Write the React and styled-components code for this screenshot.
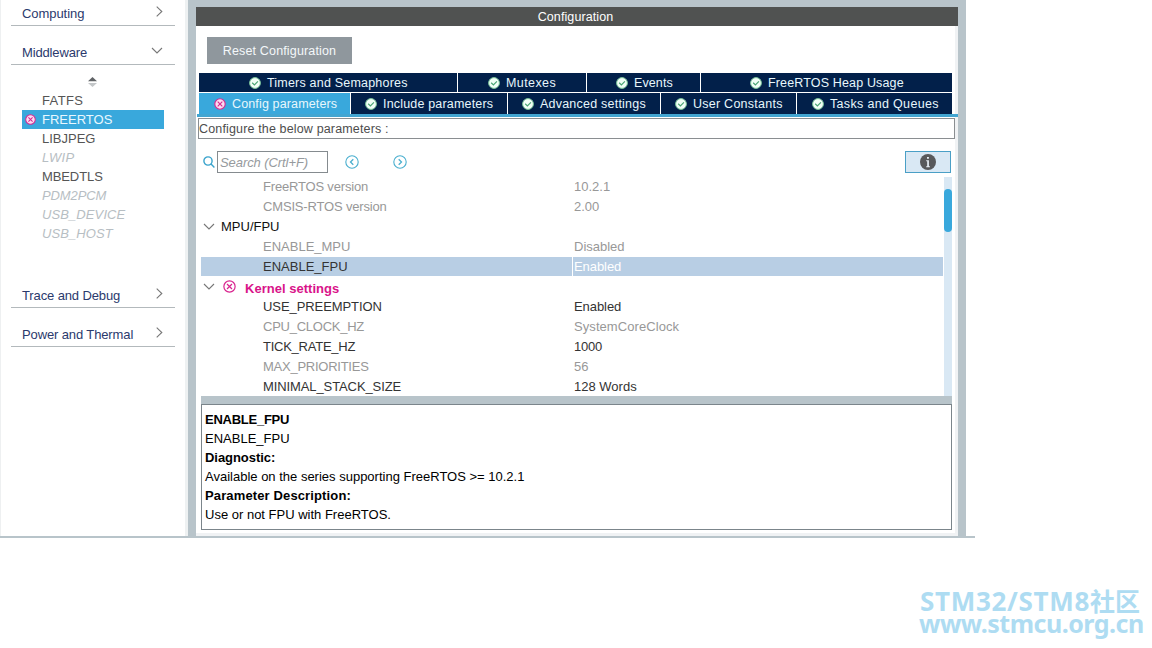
import React from "react";
import styled, { createGlobalStyle, css } from "styled-components";

const GlobalStyle = createGlobalStyle`
  * { box-sizing: border-box; }
  body {
    margin: 0;
    background: #fff;
    font-family: "Liberation Sans", Arial, sans-serif;
    font-size: 13px;
    color: #111;
  }
  svg { display: block; flex: none; }
`;

const Page = styled.div`
  width: 1152px;
  height: 648px;
  display: flex;
  flex-direction: column;
  justify-content: space-between;
  overflow: hidden;
  white-space: nowrap;
`;

const AppFrame = styled.div`
  width: 975px;
  height: 538px;
  display: flex;
  border-bottom: 2px solid #b8c4ca;
`;

const Sidebar = styled.nav`
  width: 188px;
  padding: 0 10px 0 10px;
  border-left: 1px solid #eef0f1;
  border-right: 3px solid #eef1f2;
  display: flex;
  flex-direction: column;
`;

const Category = styled.div`
  width: 164px;
  height: ${(p) => p.$height || 39}px;
  border-bottom: 1px solid #b3b9bc;
  display: flex;
  justify-content: space-between;
  align-items: flex-end;
  padding: 0 12px 4px 11px;
  color: #2b3a6d;
  line-height: 15px;
  letter-spacing: ${(p) => p.$spacing || 0}px;

  svg { margin-bottom: ${(p) => (p.$open ? 6 : 4)}px; }
`;

const MiddlewareList = styled.div`
  width: 164px;
  height: 204px;
  padding: 12px 11px 0;
`;

const SortHandle = styled.div`
  height: 14px;
  padding-left: 66px;
`;

const Module = styled.div`
  height: 19px;
  display: flex;
  align-items: center;
  line-height: 15px;
  color: #555;
  letter-spacing: ${(p) => p.$spacing || 0}px;
  ${(p) => p.$disabled && css`color: #b7bec3; font-style: italic;`}
  ${(p) => p.$selected && css`background: #39a8dc; color: #e9f8ff;`}
`;

const ModuleStatus = styled.span`
  width: 20px;
  padding-left: 3px;
`;

const ConfigFrame = styled.main`
  width: 778px;
  padding: 7px 8px 0;
  background: #b8c4ca;
`;

const TitleBar = styled.header`
  height: 19px;
  background: #505251;
  color: #fff;
  text-align: center;
  font-size: 12.5px;
  letter-spacing: 0.1px;
  line-height: 20px;
  padding-right: 3px;
`;

const ConfigPanel = styled.section`
  height: 510px;
  background: #fff;
  border: solid #f0f2f4;
  border-width: 0 3px 3px 0;
  padding: 11px 0 0 1px;
`;

const ResetButton = styled.button`
  display: block;
  width: 145px;
  height: 27px;
  margin-left: 10px;
  padding: 0;
  border: 0;
  background: #8f979d;
  color: #f4f8fa;
  font: 12.5px "Liberation Sans", Arial, sans-serif;
  letter-spacing: 0.15px;
`;

const Tabs = styled.div`
  margin: 9px -3px 0 0;
  border-bottom: 3px solid #42a5d1;
`;

const TabRow = styled.div`
  width: 753px;
  margin: 0 0 0 2px;
  display: flex;
  gap: 1px;
  & + & { margin-top: 1px; }
`;

const Tab = styled.div`
  width: ${(p) => p.$width}px;
  height: ${(p) => p.$height}px;
  padding-left: ${(p) => p.$inset}px;
  display: flex;
  align-items: center;
  gap: 6px;
  background: ${(p) => (p.$active ? "#39a8dc" : "#02204a")};
  color: #e8f7fc;
  font-size: 12.5px;
  letter-spacing: ${(p) => p.$spacing}px;
`;

const Hint = styled.div`
  width: 757px;
  height: 21px;
  margin: 1px 0 0 1px;
  border: 1px solid #8a8e91;
  color: #4d4d4d;
  font-size: 12.5px;
  letter-spacing: 0.15px;
  line-height: 20px;
`;

const SearchBar = styled.div`
  height: 22px;
  margin: 12px 3px 4px 6px;
  display: flex;
  align-items: center;
`;

const SearchInput = styled.div`
  width: 111px;
  height: 22px;
  margin: 0 17px 0 2px;
  border: 1px solid #858b8f;
  padding-left: 2px;
  color: #969a9d;
  font-style: italic;
  line-height: 21px;
  letter-spacing: -0.08px;
`;

const InfoButton = styled.div`
  width: 46px;
  height: 22px;
  margin-left: auto;
  margin-right: 1px;
  border: 1px solid #4a9fc6;
  background: #d9e8f4;
  display: grid;
  place-items: center;
`;

const TableArea = styled.div`
  width: 751px;
  margin-left: 4px;
  display: flex;
`;

const Table = styled.div`
  width: 743px;
  height: 219px;
  padding-right: 1px;
  overflow: hidden;
`;

const Row = styled.div`
  height: 19px;
  margin-bottom: 1px;
  display: flex;
  line-height: 19px;
  color: ${(p) => (p.$disabled ? "#989898" : "#333")};
  background: ${(p) => (p.$selected ? "#b8cee4" : "transparent")};
`;

const ParamName = styled.div`
  width: 371px;
  padding-left: 62px;
  letter-spacing: ${(p) => p.$spacing || 0}px;
`;

const ParamValue = styled.div`
  flex: 1;
  border-left: 1px solid #fff;
  padding-left: 1px;
  letter-spacing: ${(p) => p.$spacing || 0}px;
  color: ${(p) => (p.$selected ? "#fff" : "inherit")};
`;

const GroupRow = styled.div`
  height: 19px;
  margin-bottom: 1px;
  padding-left: 2px;
  display: flex;
  align-items: center;
  gap: ${(p) => (p.$error ? 8 : 6)}px;
`;

const ErrorTitle = styled.span`
  margin-left: 1px;
  padding-top: 3px;
  color: #d9138a;
  font-weight: bold;
  letter-spacing: 0.02px;
`;

const ScrollTrack = styled.div`
  width: 8px;
  height: 219px;
  padding-top: 12px;
  background: #d9e8f4;
`;

const ScrollThumb = styled.div`
  height: 43px;
  border-radius: 4px;
  background: #39a8dc;
`;

const Details = styled.div`
  width: 751px;
  height: 134px;
  margin-left: 4px;
  border-top: 8px solid #b8c4ca;
`;

const DetailsText = styled.div`
  height: 126px;
  border: 1px solid #7b858b;
  padding: 5px 3px;
  line-height: 19px;
  color: #000;
`;

const DetailLine = styled.div`
  font-weight: ${(p) => (p.$bold ? "bold" : "normal")};
  letter-spacing: ${(p) => p.$spacing || 0}px;
`;

const Watermark = styled.footer`
  align-self: flex-end;
  width: 233px;
  height: 58px;
  color: #aedcf2;
  font-family: "Noto Sans", "Noto Sans CJK SC", sans-serif;
  font-weight: 700;
  line-height: 22px;
`;

const WatermarkLine = styled.div`
  height: 22px;
  display: flex;
  font-size: ${(p) => p.$size}px;
  letter-spacing: ${(p) => p.$spacing}px;
  padding-left: ${(p) => p.$inset || 0}px;
`;

const WatermarkHan = styled.span`
  font-size: 25px;
  letter-spacing: 0;
`;

const Chevron = ({ down }) =>
  down ? (
    <svg width="12" height="7" viewBox="0 0 12 7" fill="none" stroke="#777" strokeWidth="1.1">
      <path d="M1 1 6 6 11 1" />
    </svg>
  ) : (
    <svg width="7" height="12" viewBox="0 0 7 12" fill="none" stroke="#777" strokeWidth="1.1">
      <path d="M.7 1.7 5.8 6.5 .7 11.3" />
    </svg>
  );

const ErrorIcon = ({ size = 11, fill = "#fbdcf0" }) => (
  <svg width={size} height={size} viewBox="0 0 12 12" fill="none" stroke="#d9248f" strokeWidth="1.1">
    <circle cx="6" cy="6" r="5.2" fill={fill} />
    <path d="m3.7 3.7 4.6 4.6m0-4.6L3.7 8.3" />
  </svg>
);

const CheckIcon = () => (
  <svg width="12" height="12" viewBox="0 0 12 12" fill="none">
    <circle cx="6" cy="6" r="5.4" fill="#f2fff7" stroke="#7cc79b" strokeWidth="1" />
    <path d="m3.2 5.8 2.2 2.1 3.5-3.6" stroke="#49a574" strokeWidth="1.2" />
  </svg>
);

const SearchIcon = () => (
  <svg width="12" height="12" viewBox="0 0 12 12" fill="none" stroke="#39a3cc" strokeWidth="1.4">
    <circle cx="5" cy="5" r="4.1" />
    <path d="m7.8 7.8 3.6 3.6" />
  </svg>
);

const StepIcon = styled(({ back, className }) => (
  <svg className={className} width="14" height="14" viewBox="0 0 14 14" fill="none" stroke="#4aafcf">
    <circle cx="7" cy="7" r="6.2" strokeWidth="1.1" />
    <path d={back ? "M8.3 4.2 5.5 7l2.8 2.8" : "M5.7 4.2 8.5 7 5.7 9.8"} strokeWidth="1.3" />
  </svg>
))`
  margin-right: 34px;
`;

const InfoIcon = () => (
  <svg width="16" height="16" viewBox="0 0 16 16">
    <circle cx="8" cy="8" r="8" fill="#58595b" />
    <path d="M6.2 6.2h2.7v6h1v1H6.2v-1h1v-5h-1zM7 2.9h1.9v1.9H7z" fill="#e8eff5" />
  </svg>
);

const modules = [
  { name: "FATFS", spacing: 0.35 },
  { name: "FREERTOS", selected: true },
  { name: "LIBJPEG" },
  { name: "LWIP", disabled: true, spacing: 0.3 },
  { name: "MBEDTLS", spacing: -0.1 },
  { name: "PDM2PCM", disabled: true, spacing: -0.1 },
  { name: "USB_DEVICE", disabled: true, spacing: 0.1 },
  { name: "USB_HOST", disabled: true, spacing: 0.1 },
];

const upperTabs = [
  { label: "Timers and Semaphores", width: 258, inset: 50, spacing: 0.2 },
  { label: "Mutexes", width: 128, inset: 30, spacing: 0.4 },
  { label: "Events", width: 113, inset: 29, spacing: 0.1 },
  { label: "FreeRTOS Heap Usage", width: 251, inset: 49, spacing: 0.15 },
];

const lowerTabs = [
  { label: "Config parameters", width: 151, inset: 15, spacing: 0.14, active: true },
  { label: "Include parameters", width: 156, inset: 14, spacing: 0.18 },
  { label: "Advanced settings", width: 152, inset: 14, spacing: 0.22 },
  { label: "User Constants", width: 135, inset: 14, spacing: 0.25 },
  { label: "Tasks and Queues", width: 155, inset: 15, spacing: 0.33 },
];

const Param = ({ name, value, disabled, selected, ns, vs }) => (
  <Row $disabled={disabled} $selected={selected}>
    <ParamName $spacing={ns}>{name}</ParamName>
    <ParamValue $selected={selected} $spacing={vs}>{value}</ParamValue>
  </Row>
);

const TabStrip = ({ tabs, height }) => (
  <TabRow>
    {tabs.map((t) => (
      <Tab key={t.label} $width={t.width} $inset={t.inset} $height={height} $active={t.active} $spacing={t.spacing}>
        {t.active ? <ErrorIcon size={12} /> : <CheckIcon />}
        {t.label}
      </Tab>
    ))}
  </TabRow>
);

export default function App() {
  return (
    <Page>
      <GlobalStyle />
      <AppFrame>
        <Sidebar>
          <Category $height={26} $spacing={-0.06}>Computing<Chevron /></Category>
          <Category $open $spacing={-0.15}>Middleware<Chevron down /></Category>
          <MiddlewareList>
            <SortHandle>
              <svg width="9" height="10" viewBox="0 0 9 10">
                <path d="M0 4.2 4.5 0 9 4.2z" fill="#606366" />
                <path d="M0 6h9L4.5 10z" fill="#c3c6c8" />
              </svg>
            </SortHandle>
            {modules.map((m) => (
              <Module key={m.name} $disabled={m.disabled} $selected={m.selected} $spacing={m.spacing}>
                <ModuleStatus>{m.selected && <ErrorIcon />}</ModuleStatus>
                {m.name}
              </Module>
            ))}
          </MiddlewareList>
          <Category $spacing={-0.12}>Trace and Debug<Chevron /></Category>
          <Category $spacing={-0.12}>Power and Thermal<Chevron /></Category>
        </Sidebar>
        <ConfigFrame>
          <TitleBar>Configuration</TitleBar>
          <ConfigPanel>
            <ResetButton>Reset Configuration</ResetButton>
            <Tabs>
              <TabStrip tabs={upperTabs} height={19} />
              <TabStrip tabs={lowerTabs} height={21} />
            </Tabs>
            <Hint>Configure the below parameters :</Hint>
            <SearchBar>
              <SearchIcon />
              <SearchInput>Search (Crtl+F)</SearchInput>
              <StepIcon back />
              <StepIcon />
              <InfoButton><InfoIcon /></InfoButton>
            </SearchBar>
            <TableArea>
              <Table>
                <Param name="FreeRTOS version" value="10.2.1" disabled ns={-0.18} />
                <Param name="CMSIS-RTOS version" value="2.00" disabled ns={-0.17} />
                <GroupRow><Chevron down />MPU/FPU</GroupRow>
                <Param name="ENABLE_MPU" value="Disabled" disabled />
                <Param name="ENABLE_FPU" value="Enabled" selected vs={-0.07} />
                <GroupRow $error>
                  <Chevron down />
                  <ErrorIcon size={13} fill="#fff" />
                  <ErrorTitle>Kernel settings</ErrorTitle>
                </GroupRow>
                <Param name="USE_PREEMPTION" value="Enabled" ns={-0.08} vs={-0.07} />
                <Param name="CPU_CLOCK_HZ" value="SystemCoreClock" disabled ns={-0.25} vs={0.07} />
                <Param name="TICK_RATE_HZ" value="1000" ns={-0.25} vs={-0.2} />
                <Param name="MAX_PRIORITIES" value="56" disabled ns={-0.25} />
                <Param name="MINIMAL_STACK_SIZE" value="128 Words" ns={-0.1} />
              </Table>
              <ScrollTrack><ScrollThumb /></ScrollTrack>
            </TableArea>
            <Details>
              <DetailsText>
                <DetailLine $bold $spacing={-0.25}>ENABLE_FPU</DetailLine>
                <DetailLine>ENABLE_FPU</DetailLine>
                <DetailLine $bold $spacing={-0.05}>Diagnostic:</DetailLine>
                <DetailLine>Available on the series supporting FreeRTOS &gt;= 10.2.1</DetailLine>
                <DetailLine $bold $spacing={0.13}>Parameter Description:</DetailLine>
                <DetailLine>Use or not FPU with FreeRTOS.</DetailLine>
              </DetailsText>
            </Details>
          </ConfigPanel>
        </ConfigFrame>
      </AppFrame>
      <Watermark>
        <WatermarkLine $inset={1} $size={26} $spacing={0.7}>
          STM32/STM8<WatermarkHan>社区</WatermarkHan>
        </WatermarkLine>
        <WatermarkLine $size={25} $spacing={-0.5}>www.stmcu.org.cn</WatermarkLine>
      </Watermark>
    </Page>
  );
}
